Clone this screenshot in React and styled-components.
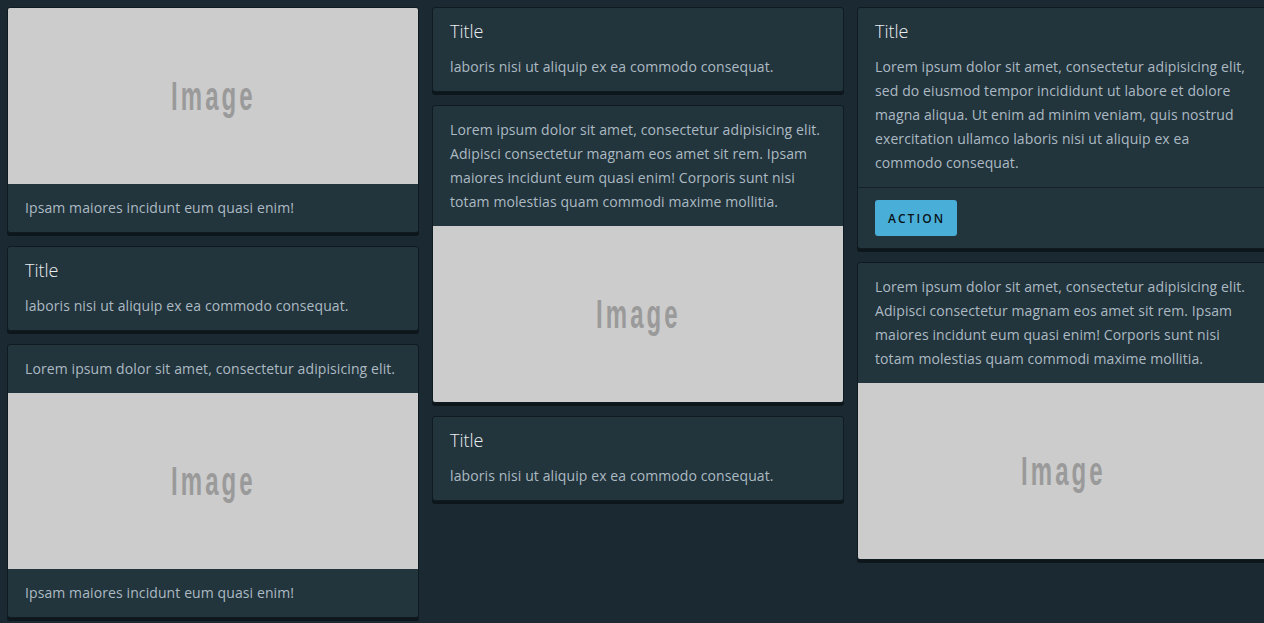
import React from "react";
import styled, { createGlobalStyle } from "styled-components";

const GlobalStyle = createGlobalStyle`
  html, body {
    margin: 0;
    padding: 0;
    background: #1b2a32;
    overflow: hidden;
  }
  body {
    font-family: "Open Sans", "Liberation Sans", sans-serif;
  }
`;

const LOREM_SHORT = "Lorem ipsum dolor sit amet, consectetur adipisicing elit.";
const LOREM_MID =
  "Lorem ipsum dolor sit amet, consectetur adipisicing elit. Adipisci consectetur magnam eos amet sit rem. Ipsam maiores incidunt eum quasi enim! Corporis sunt nisi totam molestias quam commodi maxime mollitia.";
const LOREM_LONG =
  "Lorem ipsum dolor sit amet, consectetur adipisicing elit, sed do eiusmod tempor incididunt ut labore et dolore magna aliqua. Ut enim ad minim veniam, quis nostrud exercitation ullamco laboris nisi ut aliquip ex ea commodo consequat.";
const LABORIS = "laboris nisi ut aliquip ex ea commodo consequat.";
const IPSAM = "Ipsam maiores incidunt eum quasi enim!";

const Placeholder = () => (
  <ImageBox>
    <ImageLabel>Image</ImageLabel>
  </ImageBox>
);

const TitleCard = () => (
  <Card>
    <Block>
      <CardTitle>Title</CardTitle>
      <CardText>{LABORIS}</CardText>
    </Block>
  </Card>
);

const App = () => {
  return (
    <>
      <GlobalStyle />
      <Page>
        <Column>
          <Card>
            <Placeholder />
            <Block>
              <CardText>{IPSAM}</CardText>
            </Block>
          </Card>
          <TitleCard />
          <Card>
            <Block>
              <CardText>{LOREM_SHORT}</CardText>
            </Block>
            <Placeholder />
            <Block>
              <CardText>{IPSAM}</CardText>
            </Block>
          </Card>
        </Column>

        <Column>
          <TitleCard />
          <Card>
            <Block>
              <CardText>{LOREM_MID}</CardText>
            </Block>
            <Placeholder />
          </Card>
          <TitleCard />
        </Column>

        <Column>
          <Card>
            <Block>
              <CardTitle>Title</CardTitle>
              <CardText>{LOREM_LONG}</CardText>
            </Block>
            <Footer>
              <ActionButton>Action</ActionButton>
            </Footer>
          </Card>
          <Card>
            <Block>
              <CardText>{LOREM_MID}</CardText>
            </Block>
            <Placeholder />
          </Card>
        </Column>
      </Page>
    </>
  );
};

export default App;

const Page = styled.div`
  display: grid;
  grid-template-columns: 412px 412px 412px;
  column-gap: 13px;
  align-items: start;
  padding: 7px 0 0 7px;
  width: 1264px;
  height: 623px;
  box-sizing: border-box;
  overflow: hidden;
`;

const Column = styled.div`
  display: flex;
  flex-direction: column;
  gap: 13px;
`;

const Card = styled.div`
  background: #22343c;
  border: 1px solid #0f1b21;
  border-radius: 3px;
  box-shadow: 0 3px 0 0 #0c161b;
  overflow: hidden;
  display: flex;
  flex-direction: column;
`;

const Block = styled.div`
  padding: 12px 18px 12px 17px;
`;

const CardTitle = styled.div`
  font-size: 18px;
  font-weight: 300;
  line-height: 24px;
  color: #eaedf0;
  margin-top: -1px;
  margin-bottom: 12px;
`;

const CardText = styled.p`
  margin: 0;
  font-size: 14px;
  line-height: 24px;
  letter-spacing: 0.1px;
  color: #acbac3;
`;

const ImageBox = styled.div`
  height: 176px;
  background: #cccccc;
  display: flex;
  align-items: center;
  justify-content: center;
`;

const ImageLabel = styled.span`
  display: inline-block;
  font-family: "Liberation Sans", sans-serif;
  font-size: 40px;
  font-weight: 700;
  letter-spacing: 5px;
  color: #9a9a9a;
  line-height: 1;
  transform: scaleX(0.6);
  margin: 0 0 0 0;
`;

const Footer = styled.div`
  border-top: 1px solid #152229;
  padding: 12px 18px 12px 17px;
`;

const ActionButton = styled.button`
  height: 36px;
  padding: 0 12px 0 13px;
  background: #49afd9;
  border: none;
  border-radius: 3px;
  color: #0a1216;
  font-family: "Open Sans", "Liberation Sans", sans-serif;
  font-size: 12px;
  font-weight: 600;
  letter-spacing: 0.17em;
  text-transform: uppercase;
  cursor: pointer;
`;
